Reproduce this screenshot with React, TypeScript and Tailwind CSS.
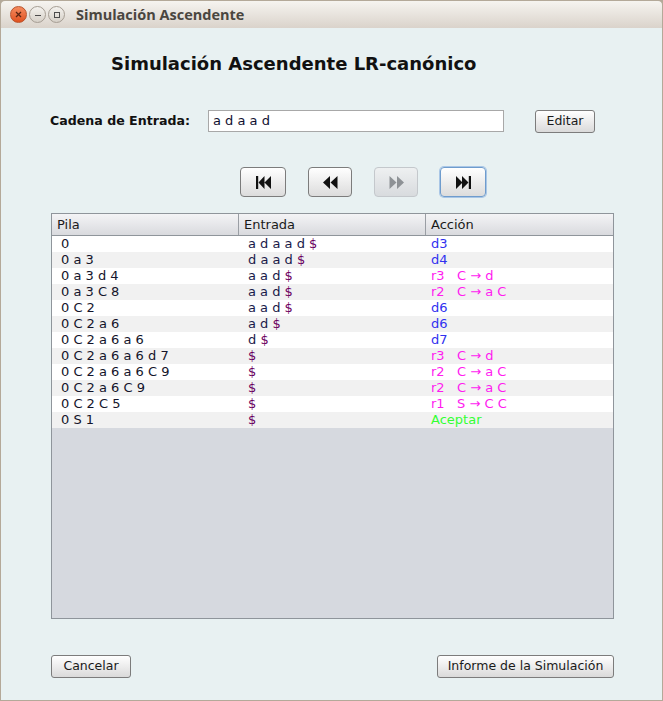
import React from "react";

const font = { fontFamily: '"DejaVu Sans", sans-serif' };

type Row = { pila: string; entrada: string; accion: string; kind: "d" | "r" | "ok" };
const rows: Row[] = [
  { pila: "0", entrada: "a d a a d", accion: "d3", kind: "d" },
  { pila: "0 a 3", entrada: "d a a d", accion: "d4", kind: "d" },
  { pila: "0 a 3 d 4", entrada: "a a d", accion: "r3   C \u2192 d", kind: "r" },
  { pila: "0 a 3 C 8", entrada: "a a d", accion: "r2   C \u2192 a C", kind: "r" },
  { pila: "0 C 2", entrada: "a a d", accion: "d6", kind: "d" },
  { pila: "0 C 2 a 6", entrada: "a d", accion: "d6", kind: "d" },
  { pila: "0 C 2 a 6 a 6", entrada: "d", accion: "d7", kind: "d" },
  { pila: "0 C 2 a 6 a 6 d 7", entrada: "", accion: "r3   C \u2192 d", kind: "r" },
  { pila: "0 C 2 a 6 a 6 C 9", entrada: "", accion: "r2   C \u2192 a C", kind: "r" },
  { pila: "0 C 2 a 6 C 9", entrada: "", accion: "r2   C \u2192 a C", kind: "r" },
  { pila: "0 C 2 C 5", entrada: "", accion: "r1   S \u2192 C C", kind: "r" },
  { pila: "0 S 1", entrada: "", accion: "Aceptar", kind: "ok" },
];

function NavButton({ children, disabled, focused, w }: { children: React.ReactNode; disabled?: boolean; focused?: boolean; w: string }) {
  return (
    <div
      className={`${w} h-[30px] flex items-center justify-center rounded-[4px] border ${
        disabled
          ? "border-[#c4c8cc] bg-gradient-to-b from-[#eef0f1] to-[#d8dbde]"
          : focused
          ? "border-[#6f9ccd] bg-gradient-to-b from-[#ffffff] to-[#dcdcdc] shadow-[0_0_0_1px_#a9c6e6]"
          : "border-[#7c7c7c] bg-gradient-to-b from-[#ffffff] to-[#dcdcdc]"
      }`}
    >
      {children}
    </div>
  );
}

function Btn({ children, w }: { children: React.ReactNode; w: string }) {
  return (
    <div
      className={`${w} h-[23px] flex items-center justify-center rounded-[3px] border border-[#7c7c7c] bg-gradient-to-b from-[#ffffff] to-[#dadada] text-[12.5px] text-[#1a1a1a]`}
      style={font}
    >
      {children}
    </div>
  );
}

export default function App() {
  return (
    <div className="w-[663px] h-[701px] flex flex-col bg-[#b4a999] overflow-hidden">
      {/* title bar */}
      <div className="h-[28px] shrink-0 rounded-t-[5px] bg-gradient-to-b from-[#f6f4f0] to-[#dad3cb] border-x border-t border-[#b4a999] flex items-center pl-[9px]">
        <div className="flex items-center gap-[2px]">
          <div className="w-[17px] h-[17px] rounded-full bg-gradient-to-b from-[#f48b5e] to-[#e0501c] border border-[#b9532c] flex items-center justify-center">
            <svg width="7" height="7" viewBox="0 0 7 7"><path d="M1 1L6 6M6 1L1 6" stroke="#5a2512" strokeWidth="1.3" /></svg>
          </div>
          <div className="w-[17px] h-[17px] rounded-full bg-gradient-to-b from-[#f4f2ee] to-[#d6d0c8] border border-[#a59d93] flex items-center justify-center">
            <svg width="8" height="8" viewBox="0 0 8 8"><path d="M1 4.5H7" stroke="#4c4c4c" strokeWidth="1" /></svg>
          </div>
          <div className="w-[17px] h-[17px] rounded-full bg-gradient-to-b from-[#f4f2ee] to-[#d6d0c8] border border-[#a59d93] flex items-center justify-center">
            <svg width="8" height="8" viewBox="0 0 8 8"><rect x="1.5" y="1.5" width="5" height="5" fill="none" stroke="#4c4c4c" strokeWidth="1" /></svg>
          </div>
        </div>
        <div className="ml-[11px] text-[14.5px] font-bold text-[#4a463f]" style={{ fontFamily: '"Open Sans", "DejaVu Sans", sans-serif' }}>
          Simulación Ascendente
        </div>
      </div>
      {/* content */}
      <div className="flex-1 mx-px mb-px bg-[#e8f1f2] flex flex-col" style={font}>
        <div className="pl-[110px] pt-[22px] h-[80px] text-[18px] font-bold text-[#111]">Simulación Ascendente LR-canónico</div>
        <div className="flex items-center h-[22px] mt-[2px]">
          <div className="ml-[49px] w-[158px] text-[12.6px] font-bold text-[#111]">Cadena de Entrada:</div>
          <div className="w-[296px] h-[22px] border border-[#a8a8a8] bg-white flex items-center pl-[4px] text-[13px] text-[#101030]">a d a a d</div>
          <div className="ml-[31px]"><Btn w="w-[60px]">Editar</Btn></div>
        </div>
        <div className="flex mt-[35px] ml-[239px] gap-[22px]">
          <NavButton w="w-[46px]">
            <svg width="17" height="13" viewBox="0 0 17 13"><rect x="1" y="0" width="2.2" height="13" fill="#111" /><path d="M3.5 6.5L9.5 0V13Z M9.5 6.5L16 0V13Z" fill="#111" /></svg>
          </NavButton>
          <NavButton w="w-[44px]">
            <svg width="17" height="13" viewBox="0 0 17 13"><path d="M1 6.5L8 0V13Z M8.5 6.5L15.5 0V13Z" fill="#111" /></svg>
          </NavButton>
          <NavButton w="w-[44px]" disabled>
            <svg width="17" height="13" viewBox="0 0 17 13"><path d="M1.5 0L8.5 6.5L1.5 13Z M9 0L16 6.5L9 13Z" fill="#8e9296" /></svg>
          </NavButton>
          <NavButton w="w-[46px]" focused>
            <svg width="17" height="13" viewBox="0 0 17 13"><path d="M1 0L7.5 6.5L1 13Z M7 0L13.5 6.5L7 13Z" fill="#111" /><rect x="13.8" y="0" width="2.2" height="13" fill="#111" /></svg>
          </NavButton>
        </div>
        {/* table */}
        <div className="ml-[50px] mt-[16px] w-[563px] h-[406px] border border-[#8f959b] bg-[#d6d9df] flex flex-col">
          <div className="h-[22px] shrink-0 flex bg-gradient-to-b from-[#f4f4f6] to-[#d9dade] border-b border-[#8f959b] text-[13px] text-[#1a1a1a]">
            <div className="w-[187px] border-r border-[#9a9ea4] pl-[5px] flex items-center">Pila</div>
            <div className="w-[187px] border-r border-[#9a9ea4] pl-[5px] flex items-center">Entrada</div>
            <div className="flex-1 pl-[5px] flex items-center">Acción</div>
          </div>
          {rows.map((r, i) => (
            <div key={i} className={`h-[16px] flex items-center text-[13px] whitespace-pre ${i % 2 === 0 ? "bg-white" : "bg-[#f1f1f1]"}`}>
              <div className="w-[187px] pl-[9px] text-[#14142a]">{r.pila}</div>
              <div className="w-[187px] pl-[9px] text-[#1a1a4a]">
                {r.entrada ? r.entrada + " " : ""}
                <span className="text-[#6a0060]">$</span>
              </div>
              <div
                className={`flex-1 pl-[5px] ${
                  r.kind === "d" ? "text-[#3030f0]" : r.kind === "r" ? "text-[#ff1af0]" : "text-[#33ff33]"
                }`}
              >
                {r.accion}
              </div>
            </div>
          ))}
        </div>
        <div className="flex justify-between ml-[50px] w-[563px] mt-[36px]">
          <Btn w="w-[80px]">Cancelar</Btn>
          <Btn w="w-[177px]">Informe de la Simulación</Btn>
        </div>
      </div>
    </div>
  );
}
